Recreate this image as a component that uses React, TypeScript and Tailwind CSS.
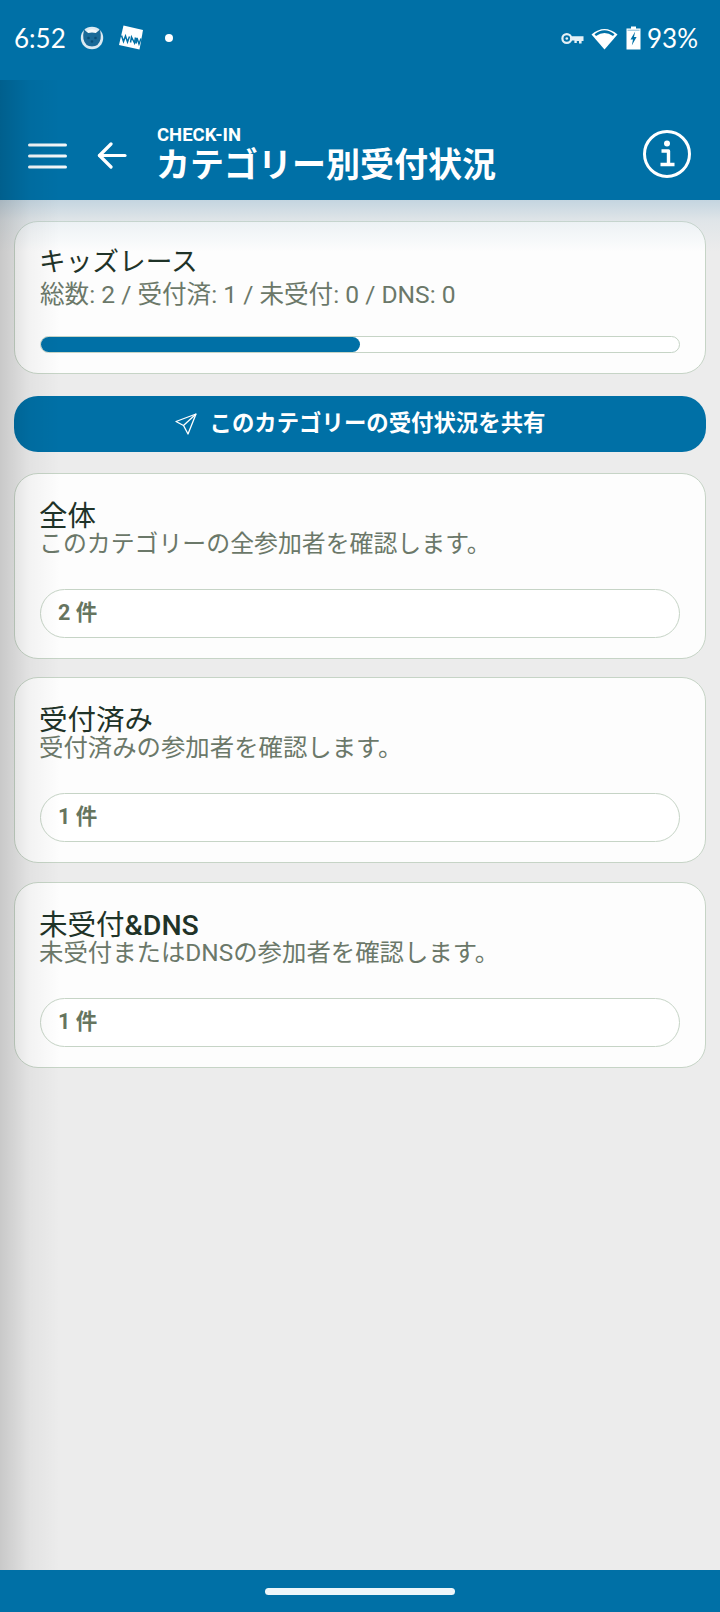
import React from "react";

const FONT = "font-['Roboto','Noto_Sans_CJK_JP',sans-serif]";
const STATUS = "font-['Lato','Roboto',sans-serif] text-[26px] leading-none text-white";

function Cat() {
  return (
    <svg width="24" height="24" viewBox="0 0 24 24">
      <circle cx="12" cy="12" r="11.2" fill="#dbeaf2" />
      <circle cx="12" cy="12" r="8.8" fill="#f4f9fb" />
      <path d="M4 3.6 L8.2 7 Q12 6 15.8 7 L20 3.6 Q21.2 9 20.6 13 Q19 20.4 12 20.6 Q5 20.4 3.4 13 Q2.8 9 4 3.6 Z" fill="#1a6a98" />
      <circle cx="8.5" cy="12" r="1.3" fill="#0a4f78" />
      <circle cx="15.5" cy="12" r="1.3" fill="#0a4f78" />
      <circle cx="12" cy="15.5" r="1.2" fill="#0a4f78" />
    </svg>
  );
}

function WnLogo() {
  return (
    <svg width="26" height="26" viewBox="0 0 26 26">
      <path d="M5.5 0.5 L25 5 L21.5 24.5 L1 20 Z" fill="#fff" />
      <path d="M3.5 10.5 L5.5 16.5 L7.5 11 L9.5 17 L11.5 11.5 M12.5 17.5 L13.5 12 L16.5 18 L17.5 12.5 M18 18.5 L19 13 L21 19 L23 13.5" fill="none" stroke="#0070a6" strokeWidth="1.5" />
    </svg>
  );
}

function Key() {
  return (
    <svg width="23" height="13" viewBox="0 0 23 13" fill="none">
      <circle cx="5.8" cy="6.5" r="4.4" stroke="#e4f0f6" strokeWidth="2.2" />
      <circle cx="5.8" cy="6.5" r="1.3" fill="#e4f0f6" />
      <path d="M10.5 4.3 H22.5 V9 H20.6 V11.6 H18 V9 H15.8 V11 H13.4 V8.6 H10.5 Z" fill="#e4f0f6" />
    </svg>
  );
}

function Wifi() {
  return (
    <svg width="27" height="23" viewBox="0 0 27 23">
      <path d="M0.5 7.5 Q13.5 -3.5 26.5 7.5 L13.5 22.5 Z" fill="#fff" />
      <path d="M3.5 7.2 Q13.5 -0.8 23.5 7.2 L22 9 Q13.5 2.8 5 9 Z" fill="#0070a6" />
    </svg>
  );
}

function Battery() {
  return (
    <svg width="15" height="24" viewBox="0 0 15 24">
      <path d="M5 0.5 H10 V2.6 H14.5 V23.5 H0.5 V2.6 H5 Z" fill="#fff" />
      <path d="M9.2 5.5 L4.5 13.5 H7 L5.8 19.5 L10.6 11 H8 Z" fill="#0070a6" />
      <path d="M1.5 3.6 H13.5 V5 H1.5 Z" fill="#0070a6" opacity="0.35" />
    </svg>
  );
}

function Hamburger() {
  return (
    <svg width="39" height="26" viewBox="0 0 39 26" className="block" fill="none" stroke="#f2f6f8" strokeWidth="3" strokeLinecap="round">
      <path d="M1.5 2 H37.5" />
      <path d="M1.5 13 H37.5" />
      <path d="M1.5 24 H37.5" />
    </svg>
  );
}

function Back() {
  return (
    <svg width="30" height="27" viewBox="0 0 30 27" className="block" fill="none" stroke="#fff" strokeWidth="3.2" strokeLinecap="round" strokeLinejoin="round">
      <path d="M28 13.5 H2.5" />
      <path d="M14 2 L2.5 13.5 L14 25" />
    </svg>
  );
}

function Info() {
  return (
    <svg width="48" height="48" viewBox="0 0 48 48" className="block" fill="none">
      <circle cx="24" cy="24" r="22.5" stroke="#fff" strokeWidth="3" />
      <circle cx="24" cy="13.5" r="3" fill="#fff" />
      <path d="M18.5 21 H25.5 V34.5 M17.5 34.5 H31.5" stroke="#fff" strokeWidth="3.4" strokeLinejoin="round" />
    </svg>
  );
}

function Send() {
  return (
    <svg width="22" height="22" viewBox="0 0 22 22" className="block" fill="none" stroke="#fff" strokeWidth="1.3" strokeLinejoin="round">
      <path d="M21 1 L1 8.5 L8.5 12.5 L13 21 Z" />
      <path d="M21 1 L8.5 12.5" />
    </svg>
  );
}

function CountCard({ title, desc, descSize, count, mb }: { title: React.ReactNode; desc: string; descSize: string; count: string; mb: string }) {
  return (
    <section className={`h-[186px] rounded-[24px] border border-[#c6d4c6] bg-[#fdfdfd] px-[25px] pt-[28px] ${mb}`}>
      <h2 className="ml-[-1px] text-[28.5px] leading-[30px] font-normal text-[#1f3328]">{title}</h2>
      <p className={`ml-[-1px] mt-[-3px] leading-[30px] text-[#6b7869] ${descSize}`}>{desc}</p>
      <div className="mt-[30px] flex h-[49px] items-center rounded-full border border-[#c6d4c6] bg-white px-[17px] text-[21.5px] font-bold text-[#66755f]">
        {count}
      </div>
    </section>
  );
}

export default function App() {
  return (
    <div className={`relative flex h-[1612px] w-[720px] flex-col overflow-hidden bg-[#ececec] ${FONT}`}>
      <div className="flex h-[80px] shrink-0 items-center justify-between bg-[#0070a6] pb-[4px] pl-[14px] pr-[22px] text-white">
        <div className="flex items-center">
          <span className={`w-[66px] ${STATUS}`}>6:52</span>
          <span className="flex w-[38px]"><Cat /></span>
          <span className="flex w-[47px]"><WnLogo /></span>
          <span className="h-[8px] w-[8px] rounded-full bg-white" />
        </div>
        <div className="flex items-center">
          <Key />
          <span className="ml-[7px] flex"><Wifi /></span>
          <span className="ml-[8px] flex"><Battery /></span>
          <span className={`ml-[6px] ${STATUS}`}>93%</span>
        </div>
      </div>

      <header className="flex h-[120px] shrink-0 items-start bg-[#0070a6] text-white">
        <div className="ml-[28px] mt-[63px]"><Hamburger /></div>
        <div className="ml-[30px] mt-[62px]"><Back /></div>
        <div className="ml-[30px] mt-[46px] flex-1">
          <div className="text-[18.5px] font-bold leading-[18px]">CHECK-IN</div>
          <div className="mt-[1px] ml-[-1px] text-[34px] font-semibold leading-[40px]">カテゴリー別受付状況</div>
        </div>
        <div className="mr-[29px] mt-[50px]"><Info /></div>
      </header>

      <main className="flex-1 px-[14px] pt-[21px]">
        <section className="mb-[22px] h-[153px] rounded-[24px] border border-[#c6d4c6] bg-[#fdfdfd] px-[25px] pt-[24px]">
          <h2 className="ml-[-1px] text-[26.7px] leading-[32px] font-normal text-[#1f3328]">キッズレース</h2>
          <p className="mt-[1px] text-[24.6px] leading-[32px] text-[#6b7869]">総数: 2 / 受付済: 1 / 未受付: 0 / DNS: 0</p>
          <div className="mt-[25px] h-[17px] rounded-full border border-[#c6d4c6] bg-white">
            <div className="h-full w-1/2 rounded-full bg-[#0070a6]" />
          </div>
        </section>

        <button className="mb-[21px] flex h-[56px] w-full items-center justify-center gap-[13px] rounded-[24px] bg-[#0070a6] text-[22.4px] font-semibold text-white">
          <Send />
          <span>このカテゴリーの受付状況を共有</span>
        </button>

        <CountCard title="全体" desc="このカテゴリーの全参加者を確認します。" descSize="text-[23.9px]" count="2 件" mb="mb-[18px]" />
        <CountCard title="受付済み" desc="受付済みの参加者を確認します。" descSize="text-[24.4px]" count="1 件" mb="mb-[19px]" />
        <CountCard title={<>未受付<span className="font-medium">&amp;DNS</span></>} desc="未受付またはDNSの参加者を確認します。" descSize="text-[24.4px]" count="1 件" mb="" />
      </main>

      <footer className="flex h-[42px] shrink-0 items-center justify-center bg-[#0070a6]">
        <div className="h-[7px] w-[190px] rounded-full bg-[#edf6fa]" />
      </footer>

      {/* Shadow cast down from the app bar, lying over the content */}
      <div className="pointer-events-none absolute left-0 right-0 top-[200px] h-[52px] bg-gradient-to-b from-[#c4d5e0] via-[#c4d5e0]/30 via-40% to-[#c4d5e0]/0" />
      <div className="pointer-events-none absolute bottom-[42px] left-0 top-[80px] w-[60px] bg-gradient-to-r from-black/15 via-black/4 to-black/0" />
    </div>
  );
}
